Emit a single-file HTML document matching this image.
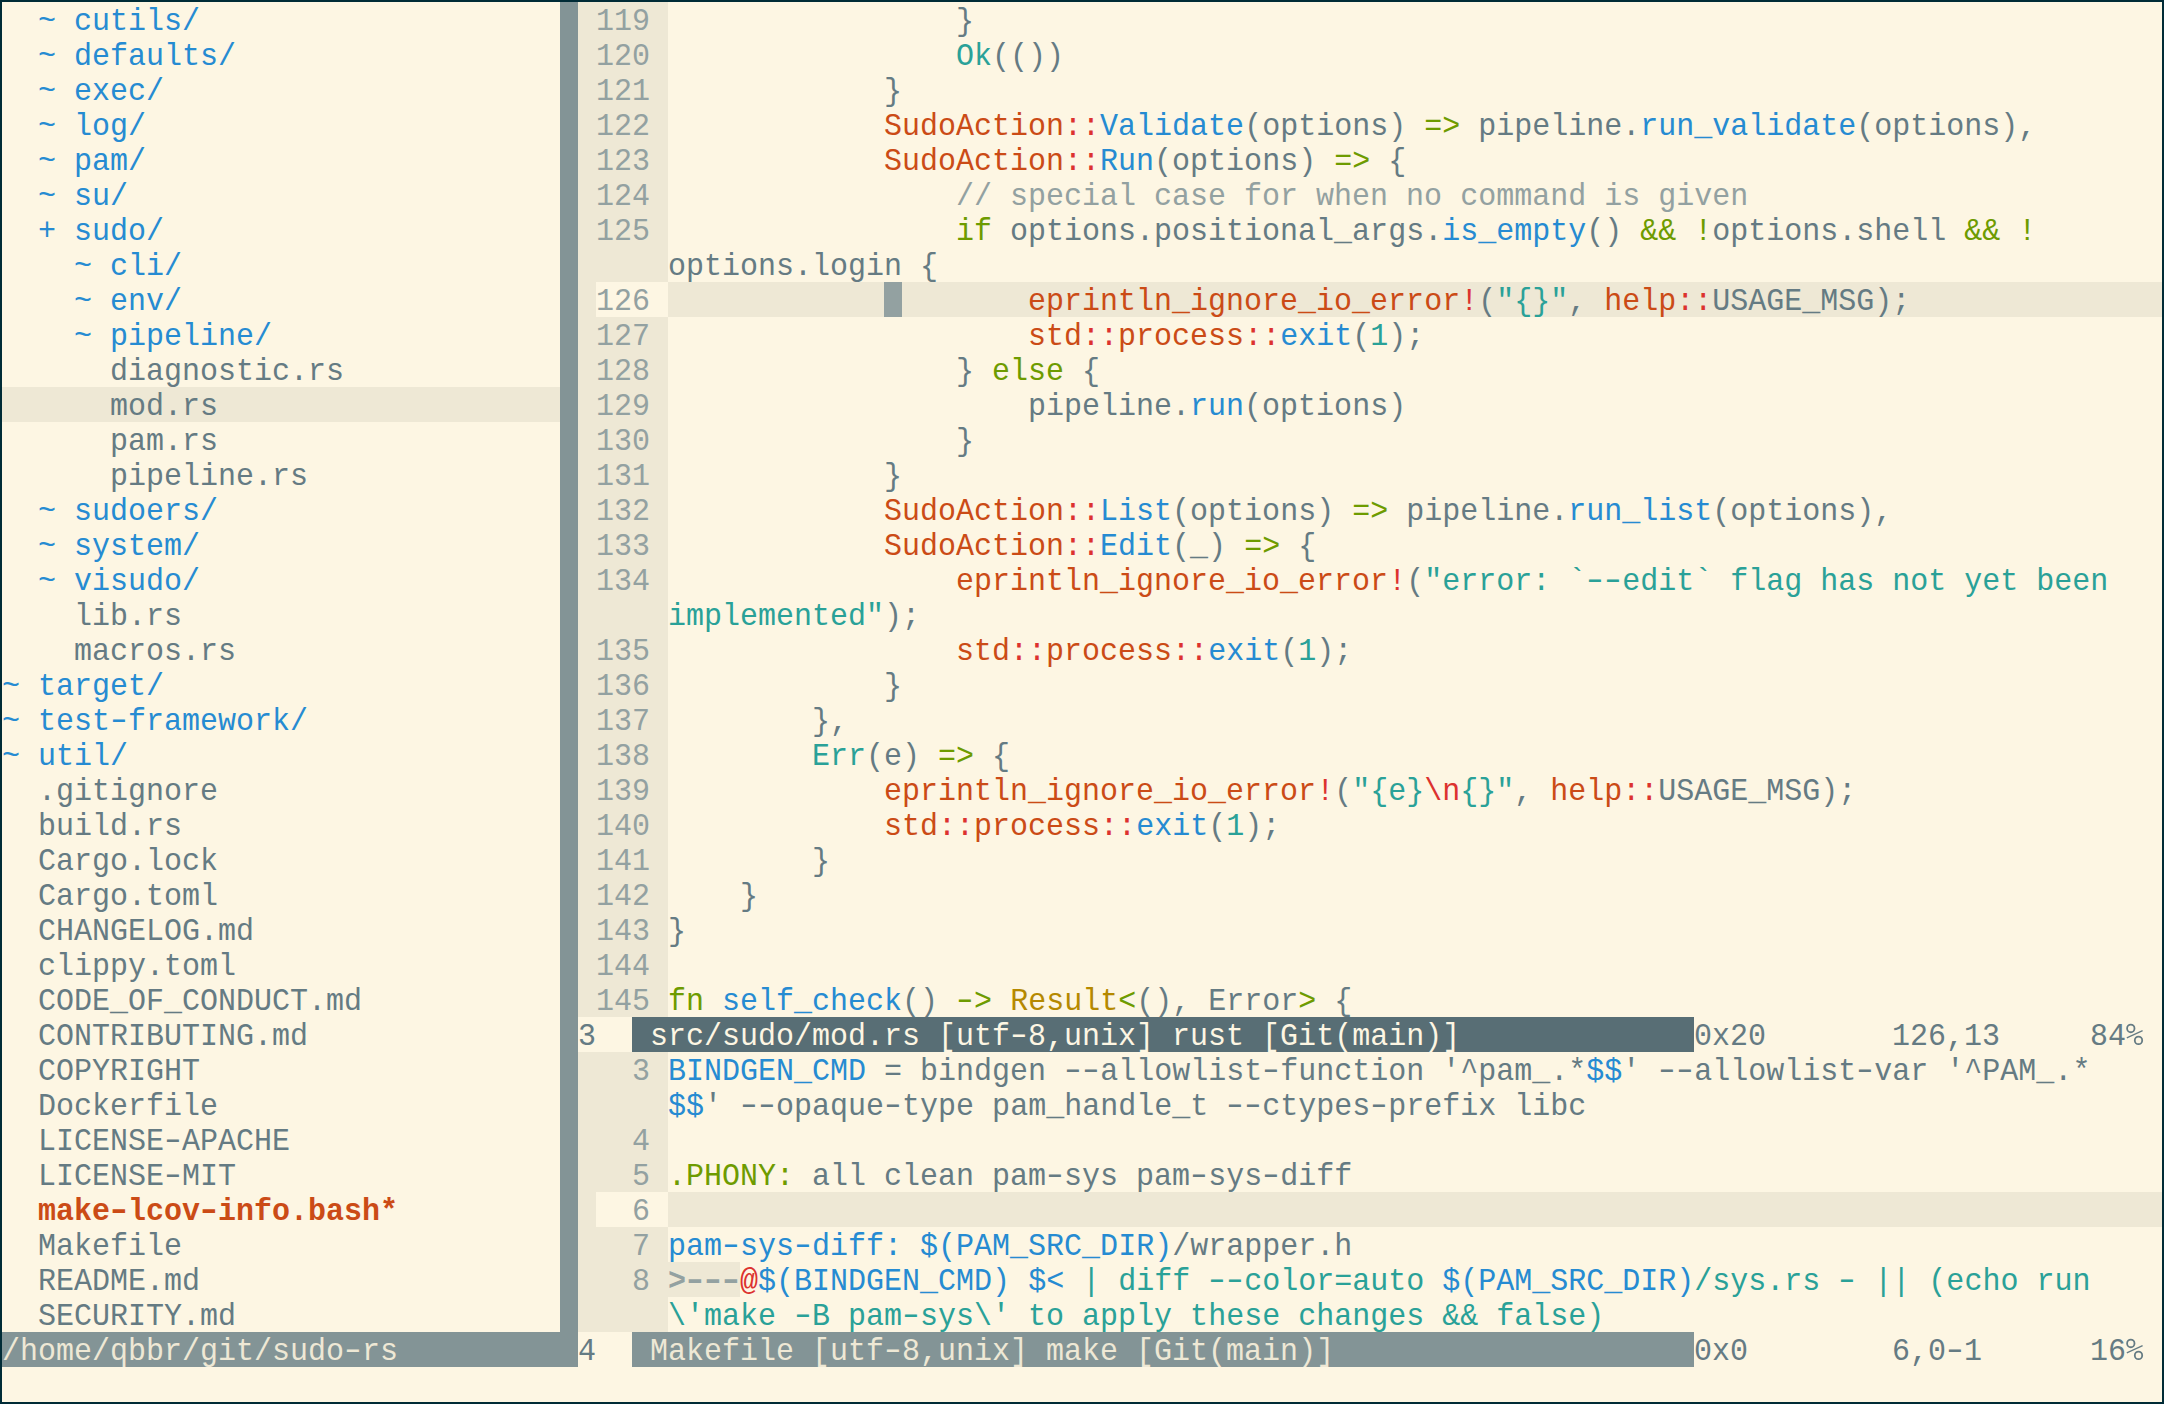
<!DOCTYPE html><html><head><meta charset="utf-8"><style>
html,body{margin:0;padding:0;}body{width:2164px;height:1404px;overflow:hidden;background:#002b36;position:relative;}
#s{position:absolute;left:2px;top:2px;width:2160px;height:1400px;background:#fdf6e3;overflow:hidden;}
.r{position:absolute;}
.t{position:absolute;white-space:pre;font-family:"Liberation Mono",monospace;font-size:30px;line-height:35px;height:35px;letter-spacing:0.0px;color:#657b83;transform:scaleY(1.05);transform-origin:0 25px;}
b{font-weight:bold}.pc{display:inline-block;vertical-align:top;}.h{font-style:normal;display:inline-block;transform:translateY(-0.9px) scaleX(1.46);}
</style></head><body><div id="s">
<div class="r" style="left:0px;top:385px;width:558px;height:35px;background:#eee8d5"></div>
<div class="r" style="left:558px;top:0px;width:18px;height:1330px;background:#839496"></div>
<div class="r" style="left:0px;top:1330px;width:576px;height:35px;background:#839496"></div>
<div class="r" style="left:576px;top:0px;width:90px;height:1015px;background:#eee8d5"></div>
<div class="r" style="left:666px;top:280px;width:1494px;height:35px;background:#eee8d5"></div>
<div class="r" style="left:594px;top:280px;width:72px;height:35px;background:#fdf6e3"></div>
<div class="r" style="left:882px;top:280px;width:18px;height:35px;background:#93a1a1"></div>
<div class="r" style="left:630px;top:1015px;width:1062px;height:35px;background:#586e75"></div>
<div class="r" style="left:576px;top:1050px;width:90px;height:280px;background:#eee8d5"></div>
<div class="r" style="left:666px;top:1190px;width:1494px;height:35px;background:#eee8d5"></div>
<div class="r" style="left:594px;top:1190px;width:72px;height:35px;background:#fdf6e3"></div>
<div class="r" style="left:666px;top:1260px;width:72px;height:35px;background:#eee8d5"></div>
<div class="r" style="left:630px;top:1330px;width:1062px;height:35px;background:#839496"></div>
<div class="t" style="left:36px;top:3px"><span style="color:#268bd2">~ cutils/</span></div>
<div class="t" style="left:36px;top:38px"><span style="color:#268bd2">~ defaults/</span></div>
<div class="t" style="left:36px;top:73px"><span style="color:#268bd2">~ exec/</span></div>
<div class="t" style="left:36px;top:108px"><span style="color:#268bd2">~ log/</span></div>
<div class="t" style="left:36px;top:143px"><span style="color:#268bd2">~ pam/</span></div>
<div class="t" style="left:36px;top:178px"><span style="color:#268bd2">~ su/</span></div>
<div class="t" style="left:36px;top:213px"><span style="color:#268bd2">+ sudo/</span></div>
<div class="t" style="left:72px;top:248px"><span style="color:#268bd2">~ cli/</span></div>
<div class="t" style="left:72px;top:283px"><span style="color:#268bd2">~ env/</span></div>
<div class="t" style="left:72px;top:318px"><span style="color:#268bd2">~ pipeline/</span></div>
<div class="t" style="left:108px;top:353px"><span style="color:#657b83">diagnostic.rs</span></div>
<div class="t" style="left:108px;top:388px"><span style="color:#657b83">mod.rs</span></div>
<div class="t" style="left:108px;top:423px"><span style="color:#657b83">pam.rs</span></div>
<div class="t" style="left:108px;top:458px"><span style="color:#657b83">pipeline.rs</span></div>
<div class="t" style="left:36px;top:493px"><span style="color:#268bd2">~ sudoers/</span></div>
<div class="t" style="left:36px;top:528px"><span style="color:#268bd2">~ system/</span></div>
<div class="t" style="left:36px;top:563px"><span style="color:#268bd2">~ visudo/</span></div>
<div class="t" style="left:72px;top:598px"><span style="color:#657b83">lib.rs</span></div>
<div class="t" style="left:72px;top:633px"><span style="color:#657b83">macros.rs</span></div>
<div class="t" style="left:0px;top:668px"><span style="color:#268bd2">~ target/</span></div>
<div class="t" style="left:0px;top:703px"><span style="color:#268bd2">~ test<i class="h">-</i>framework/</span></div>
<div class="t" style="left:0px;top:738px"><span style="color:#268bd2">~ util/</span></div>
<div class="t" style="left:36px;top:773px"><span style="color:#657b83">.gitignore</span></div>
<div class="t" style="left:36px;top:808px"><span style="color:#657b83">build.rs</span></div>
<div class="t" style="left:36px;top:843px"><span style="color:#657b83">Cargo.lock</span></div>
<div class="t" style="left:36px;top:878px"><span style="color:#657b83">Cargo.toml</span></div>
<div class="t" style="left:36px;top:913px"><span style="color:#657b83">CHANGELOG.md</span></div>
<div class="t" style="left:36px;top:948px"><span style="color:#657b83">clippy.toml</span></div>
<div class="t" style="left:36px;top:983px"><span style="color:#657b83">CODE_OF_CONDUCT.md</span></div>
<div class="t" style="left:36px;top:1018px"><span style="color:#657b83">CONTRIBUTING.md</span></div>
<div class="t" style="left:36px;top:1053px"><span style="color:#657b83">COPYRIGHT</span></div>
<div class="t" style="left:36px;top:1088px"><span style="color:#657b83">Dockerfile</span></div>
<div class="t" style="left:36px;top:1123px"><span style="color:#657b83">LICENSE<i class="h">-</i>APACHE</span></div>
<div class="t" style="left:36px;top:1158px"><span style="color:#657b83">LICENSE<i class="h">-</i>MIT</span></div>
<div class="t" style="left:36px;top:1193px"><b style="color:#cb4b16">make<i class="h">-</i>lcov<i class="h">-</i>info.bash*</b></div>
<div class="t" style="left:36px;top:1228px"><span style="color:#657b83">Makefile</span></div>
<div class="t" style="left:36px;top:1263px"><span style="color:#657b83">README.md</span></div>
<div class="t" style="left:36px;top:1298px"><span style="color:#657b83">SECURITY.md</span></div>
<div class="t" style="left:0px;top:1333px"><span style="color:#eee8d5">/home/qbbr/git/sudo<i class="h">-</i>rs</span></div>
<div class="t" style="left:594px;top:3px"><span style="color:#93a1a1">119</span></div>
<div class="t" style="left:666px;top:3px"><span style="color:#657b83">                }</span></div>
<div class="t" style="left:594px;top:38px"><span style="color:#93a1a1">120</span></div>
<div class="t" style="left:666px;top:38px"><span style="color:#657b83">                </span><span style="color:#2aa198">Ok</span><span style="color:#657b83">(())</span></div>
<div class="t" style="left:594px;top:73px"><span style="color:#93a1a1">121</span></div>
<div class="t" style="left:666px;top:73px"><span style="color:#657b83">            }</span></div>
<div class="t" style="left:594px;top:108px"><span style="color:#93a1a1">122</span></div>
<div class="t" style="left:666px;top:108px"><span style="color:#657b83">            </span><span style="color:#cb4b16">SudoAction</span><span style="color:#dc322f">::</span><span style="color:#268bd2">Validate</span><span style="color:#657b83">(options) </span><span style="color:#6e9b00">=&gt;</span><span style="color:#657b83"> pipeline.</span><span style="color:#268bd2">run_validate</span><span style="color:#657b83">(options),</span></div>
<div class="t" style="left:594px;top:143px"><span style="color:#93a1a1">123</span></div>
<div class="t" style="left:666px;top:143px"><span style="color:#657b83">            </span><span style="color:#cb4b16">SudoAction</span><span style="color:#dc322f">::</span><span style="color:#268bd2">Run</span><span style="color:#657b83">(options) </span><span style="color:#6e9b00">=&gt;</span><span style="color:#657b83"> {</span></div>
<div class="t" style="left:594px;top:178px"><span style="color:#93a1a1">124</span></div>
<div class="t" style="left:666px;top:178px"><span style="color:#93a1a1">                // special case for when no command is given</span></div>
<div class="t" style="left:594px;top:213px"><span style="color:#93a1a1">125</span></div>
<div class="t" style="left:666px;top:213px"><span style="color:#657b83">                </span><span style="color:#6e9b00">if</span><span style="color:#657b83"> options.positional_args.</span><span style="color:#268bd2">is_empty</span><span style="color:#657b83">() </span><span style="color:#6e9b00">&amp;&amp;</span><span style="color:#657b83"> </span><span style="color:#6e9b00">!</span><span style="color:#657b83">options.shell </span><span style="color:#6e9b00">&amp;&amp;</span><span style="color:#657b83"> </span><span style="color:#6e9b00">!</span></div>
<div class="t" style="left:666px;top:248px"><span style="color:#657b83">options.login {</span></div>
<div class="t" style="left:594px;top:283px"><span style="color:#93a1a1">126</span></div>
<div class="t" style="left:666px;top:283px"><span style="color:#657b83">                    </span><span style="color:#cb4b16">eprintln_ignore_io_error</span><span style="color:#dc322f">!</span><span style="color:#657b83">(</span><span style="color:#2aa198">&quot;{}&quot;</span><span style="color:#657b83">, </span><span style="color:#cb4b16">help</span><span style="color:#dc322f">::</span><span style="color:#657b83">USAGE_MSG);</span></div>
<div class="t" style="left:594px;top:318px"><span style="color:#93a1a1">127</span></div>
<div class="t" style="left:666px;top:318px"><span style="color:#657b83">                    </span><span style="color:#cb4b16">std</span><span style="color:#dc322f">::</span><span style="color:#cb4b16">process</span><span style="color:#dc322f">::</span><span style="color:#268bd2">exit</span><span style="color:#657b83">(</span><span style="color:#2aa198">1</span><span style="color:#657b83">);</span></div>
<div class="t" style="left:594px;top:353px"><span style="color:#93a1a1">128</span></div>
<div class="t" style="left:666px;top:353px"><span style="color:#657b83">                } </span><span style="color:#6e9b00">else</span><span style="color:#657b83"> {</span></div>
<div class="t" style="left:594px;top:388px"><span style="color:#93a1a1">129</span></div>
<div class="t" style="left:666px;top:388px"><span style="color:#657b83">                    pipeline.</span><span style="color:#268bd2">run</span><span style="color:#657b83">(options)</span></div>
<div class="t" style="left:594px;top:423px"><span style="color:#93a1a1">130</span></div>
<div class="t" style="left:666px;top:423px"><span style="color:#657b83">                }</span></div>
<div class="t" style="left:594px;top:458px"><span style="color:#93a1a1">131</span></div>
<div class="t" style="left:666px;top:458px"><span style="color:#657b83">            }</span></div>
<div class="t" style="left:594px;top:493px"><span style="color:#93a1a1">132</span></div>
<div class="t" style="left:666px;top:493px"><span style="color:#657b83">            </span><span style="color:#cb4b16">SudoAction</span><span style="color:#dc322f">::</span><span style="color:#268bd2">List</span><span style="color:#657b83">(options) </span><span style="color:#6e9b00">=&gt;</span><span style="color:#657b83"> pipeline.</span><span style="color:#268bd2">run_list</span><span style="color:#657b83">(options),</span></div>
<div class="t" style="left:594px;top:528px"><span style="color:#93a1a1">133</span></div>
<div class="t" style="left:666px;top:528px"><span style="color:#657b83">            </span><span style="color:#cb4b16">SudoAction</span><span style="color:#dc322f">::</span><span style="color:#268bd2">Edit</span><span style="color:#657b83">(_) </span><span style="color:#6e9b00">=&gt;</span><span style="color:#657b83"> {</span></div>
<div class="t" style="left:594px;top:563px"><span style="color:#93a1a1">134</span></div>
<div class="t" style="left:666px;top:563px"><span style="color:#657b83">                </span><span style="color:#cb4b16">eprintln_ignore_io_error</span><span style="color:#dc322f">!</span><span style="color:#657b83">(</span><span style="color:#2aa198">&quot;error: `<i class="h">-</i><i class="h">-</i>edit` flag has not yet been</span></div>
<div class="t" style="left:666px;top:598px"><span style="color:#2aa198">implemented&quot;</span><span style="color:#657b83">);</span></div>
<div class="t" style="left:594px;top:633px"><span style="color:#93a1a1">135</span></div>
<div class="t" style="left:666px;top:633px"><span style="color:#657b83">                </span><span style="color:#cb4b16">std</span><span style="color:#dc322f">::</span><span style="color:#cb4b16">process</span><span style="color:#dc322f">::</span><span style="color:#268bd2">exit</span><span style="color:#657b83">(</span><span style="color:#2aa198">1</span><span style="color:#657b83">);</span></div>
<div class="t" style="left:594px;top:668px"><span style="color:#93a1a1">136</span></div>
<div class="t" style="left:666px;top:668px"><span style="color:#657b83">            }</span></div>
<div class="t" style="left:594px;top:703px"><span style="color:#93a1a1">137</span></div>
<div class="t" style="left:666px;top:703px"><span style="color:#657b83">        },</span></div>
<div class="t" style="left:594px;top:738px"><span style="color:#93a1a1">138</span></div>
<div class="t" style="left:666px;top:738px"><span style="color:#657b83">        </span><span style="color:#2aa198">Err</span><span style="color:#657b83">(e) </span><span style="color:#6e9b00">=&gt;</span><span style="color:#657b83"> {</span></div>
<div class="t" style="left:594px;top:773px"><span style="color:#93a1a1">139</span></div>
<div class="t" style="left:666px;top:773px"><span style="color:#657b83">            </span><span style="color:#cb4b16">eprintln_ignore_io_error</span><span style="color:#dc322f">!</span><span style="color:#657b83">(</span><span style="color:#2aa198">&quot;{e}</span><span style="color:#dc322f">\n</span><span style="color:#2aa198">{}&quot;</span><span style="color:#657b83">, </span><span style="color:#cb4b16">help</span><span style="color:#dc322f">::</span><span style="color:#657b83">USAGE_MSG);</span></div>
<div class="t" style="left:594px;top:808px"><span style="color:#93a1a1">140</span></div>
<div class="t" style="left:666px;top:808px"><span style="color:#657b83">            </span><span style="color:#cb4b16">std</span><span style="color:#dc322f">::</span><span style="color:#cb4b16">process</span><span style="color:#dc322f">::</span><span style="color:#268bd2">exit</span><span style="color:#657b83">(</span><span style="color:#2aa198">1</span><span style="color:#657b83">);</span></div>
<div class="t" style="left:594px;top:843px"><span style="color:#93a1a1">141</span></div>
<div class="t" style="left:666px;top:843px"><span style="color:#657b83">        }</span></div>
<div class="t" style="left:594px;top:878px"><span style="color:#93a1a1">142</span></div>
<div class="t" style="left:666px;top:878px"><span style="color:#657b83">    }</span></div>
<div class="t" style="left:594px;top:913px"><span style="color:#93a1a1">143</span></div>
<div class="t" style="left:666px;top:913px"><span style="color:#657b83">}</span></div>
<div class="t" style="left:594px;top:948px"><span style="color:#93a1a1">144</span></div>
<div class="t" style="left:594px;top:983px"><span style="color:#93a1a1">145</span></div>
<div class="t" style="left:666px;top:983px"><span style="color:#6e9b00">fn</span><span style="color:#657b83"> </span><span style="color:#268bd2">self_check</span><span style="color:#657b83">() </span><span style="color:#6e9b00"><i class="h">-</i>&gt;</span><span style="color:#657b83"> </span><span style="color:#b58900">Result</span><span style="color:#6e9b00">&lt;</span><span style="color:#657b83">(), Error</span><span style="color:#6e9b00">&gt;</span><span style="color:#657b83"> {</span></div>
<div class="t" style="left:576px;top:1018px"><span style="color:#657b83">3</span></div>
<div class="t" style="left:630px;top:1018px"><span style="color:#fdf6e3"> src/sudo/mod.rs [utf<i class="h">-</i>8,unix] rust [Git(main)]</span></div>
<div class="t" style="left:1692px;top:1018px"><span style="color:#657b83">0x20</span></div>
<div class="t" style="left:1890px;top:1018px"><span style="color:#657b83">126,13</span></div>
<div class="t" style="left:2088px;top:1018px"><span style="color:#657b83">84<svg class="pc" width="18" height="35" viewBox="0 0 18 35"><ellipse cx="4.8" cy="9.2" rx="3.7" ry="3.6" fill="none" stroke="currentColor" stroke-width="1.8"/><ellipse cx="12.5" cy="20.6" rx="3.7" ry="3.6" fill="none" stroke="currentColor" stroke-width="1.8"/><line x1="0.8" y1="18.1" x2="16.6" y2="11.2" stroke="currentColor" stroke-width="1.3"/></svg></span></div>
<div class="t" style="left:594px;top:1053px"><span style="color:#93a1a1">  3</span></div>
<div class="t" style="left:666px;top:1053px"><span style="color:#268bd2">BINDGEN_CMD</span><span style="color:#657b83"> = bindgen <i class="h">-</i><i class="h">-</i>allowlist<i class="h">-</i>function &#x27;^pam_.*</span><span style="color:#268bd2">$$</span><span style="color:#657b83">&#x27; <i class="h">-</i><i class="h">-</i>allowlist<i class="h">-</i>var &#x27;^PAM_.*</span></div>
<div class="t" style="left:666px;top:1088px"><span style="color:#268bd2">$$</span><span style="color:#657b83">&#x27; <i class="h">-</i><i class="h">-</i>opaque<i class="h">-</i>type pam_handle_t <i class="h">-</i><i class="h">-</i>ctypes<i class="h">-</i>prefix libc</span></div>
<div class="t" style="left:594px;top:1123px"><span style="color:#93a1a1">  4</span></div>
<div class="t" style="left:594px;top:1158px"><span style="color:#93a1a1">  5</span></div>
<div class="t" style="left:666px;top:1158px"><span style="color:#6e9b00">.PHONY:</span><span style="color:#657b83"> all clean pam<i class="h">-</i>sys pam<i class="h">-</i>sys<i class="h">-</i>diff</span></div>
<div class="t" style="left:594px;top:1193px"><span style="color:#93a1a1">  6</span></div>
<div class="t" style="left:594px;top:1228px"><span style="color:#93a1a1">  7</span></div>
<div class="t" style="left:666px;top:1228px"><span style="color:#268bd2">pam<i class="h">-</i>sys<i class="h">-</i>diff:</span><span style="color:#657b83"> </span><span style="color:#268bd2">$(PAM_SRC_DIR)</span><span style="color:#657b83">/wrapper.h</span></div>
<div class="t" style="left:594px;top:1263px"><span style="color:#93a1a1">  8</span></div>
<div class="t" style="left:666px;top:1263px"><b style="color:#93a1a1">&gt;<i class="h">-</i><i class="h">-</i><i class="h">-</i></b><span style="color:#dc322f">@</span><span style="color:#268bd2">$(BINDGEN_CMD)</span><span style="color:#657b83"> </span><span style="color:#268bd2">$&lt;</span><span style="color:#2aa198"> | diff <i class="h">-</i><i class="h">-</i>color=auto </span><span style="color:#268bd2">$(PAM_SRC_DIR)</span><span style="color:#2aa198">/sys.rs <i class="h">-</i> || (echo run</span></div>
<div class="t" style="left:666px;top:1298px"><span style="color:#2aa198">\&#x27;make <i class="h">-</i>B pam<i class="h">-</i>sys\&#x27; to apply these changes &amp;&amp; false)</span></div>
<div class="t" style="left:576px;top:1333px"><span style="color:#657b83">4</span></div>
<div class="t" style="left:630px;top:1333px"><span style="color:#eee8d5"> Makefile [utf<i class="h">-</i>8,unix] make [Git(main)]</span></div>
<div class="t" style="left:1692px;top:1333px"><span style="color:#657b83">0x0</span></div>
<div class="t" style="left:1890px;top:1333px"><span style="color:#657b83">6,0<i class="h">-</i>1</span></div>
<div class="t" style="left:2088px;top:1333px"><span style="color:#657b83">16<svg class="pc" width="18" height="35" viewBox="0 0 18 35"><ellipse cx="4.8" cy="9.2" rx="3.7" ry="3.6" fill="none" stroke="currentColor" stroke-width="1.8"/><ellipse cx="12.5" cy="20.6" rx="3.7" ry="3.6" fill="none" stroke="currentColor" stroke-width="1.8"/><line x1="0.8" y1="18.1" x2="16.6" y2="11.2" stroke="currentColor" stroke-width="1.3"/></svg></span></div>
</div></body></html>
